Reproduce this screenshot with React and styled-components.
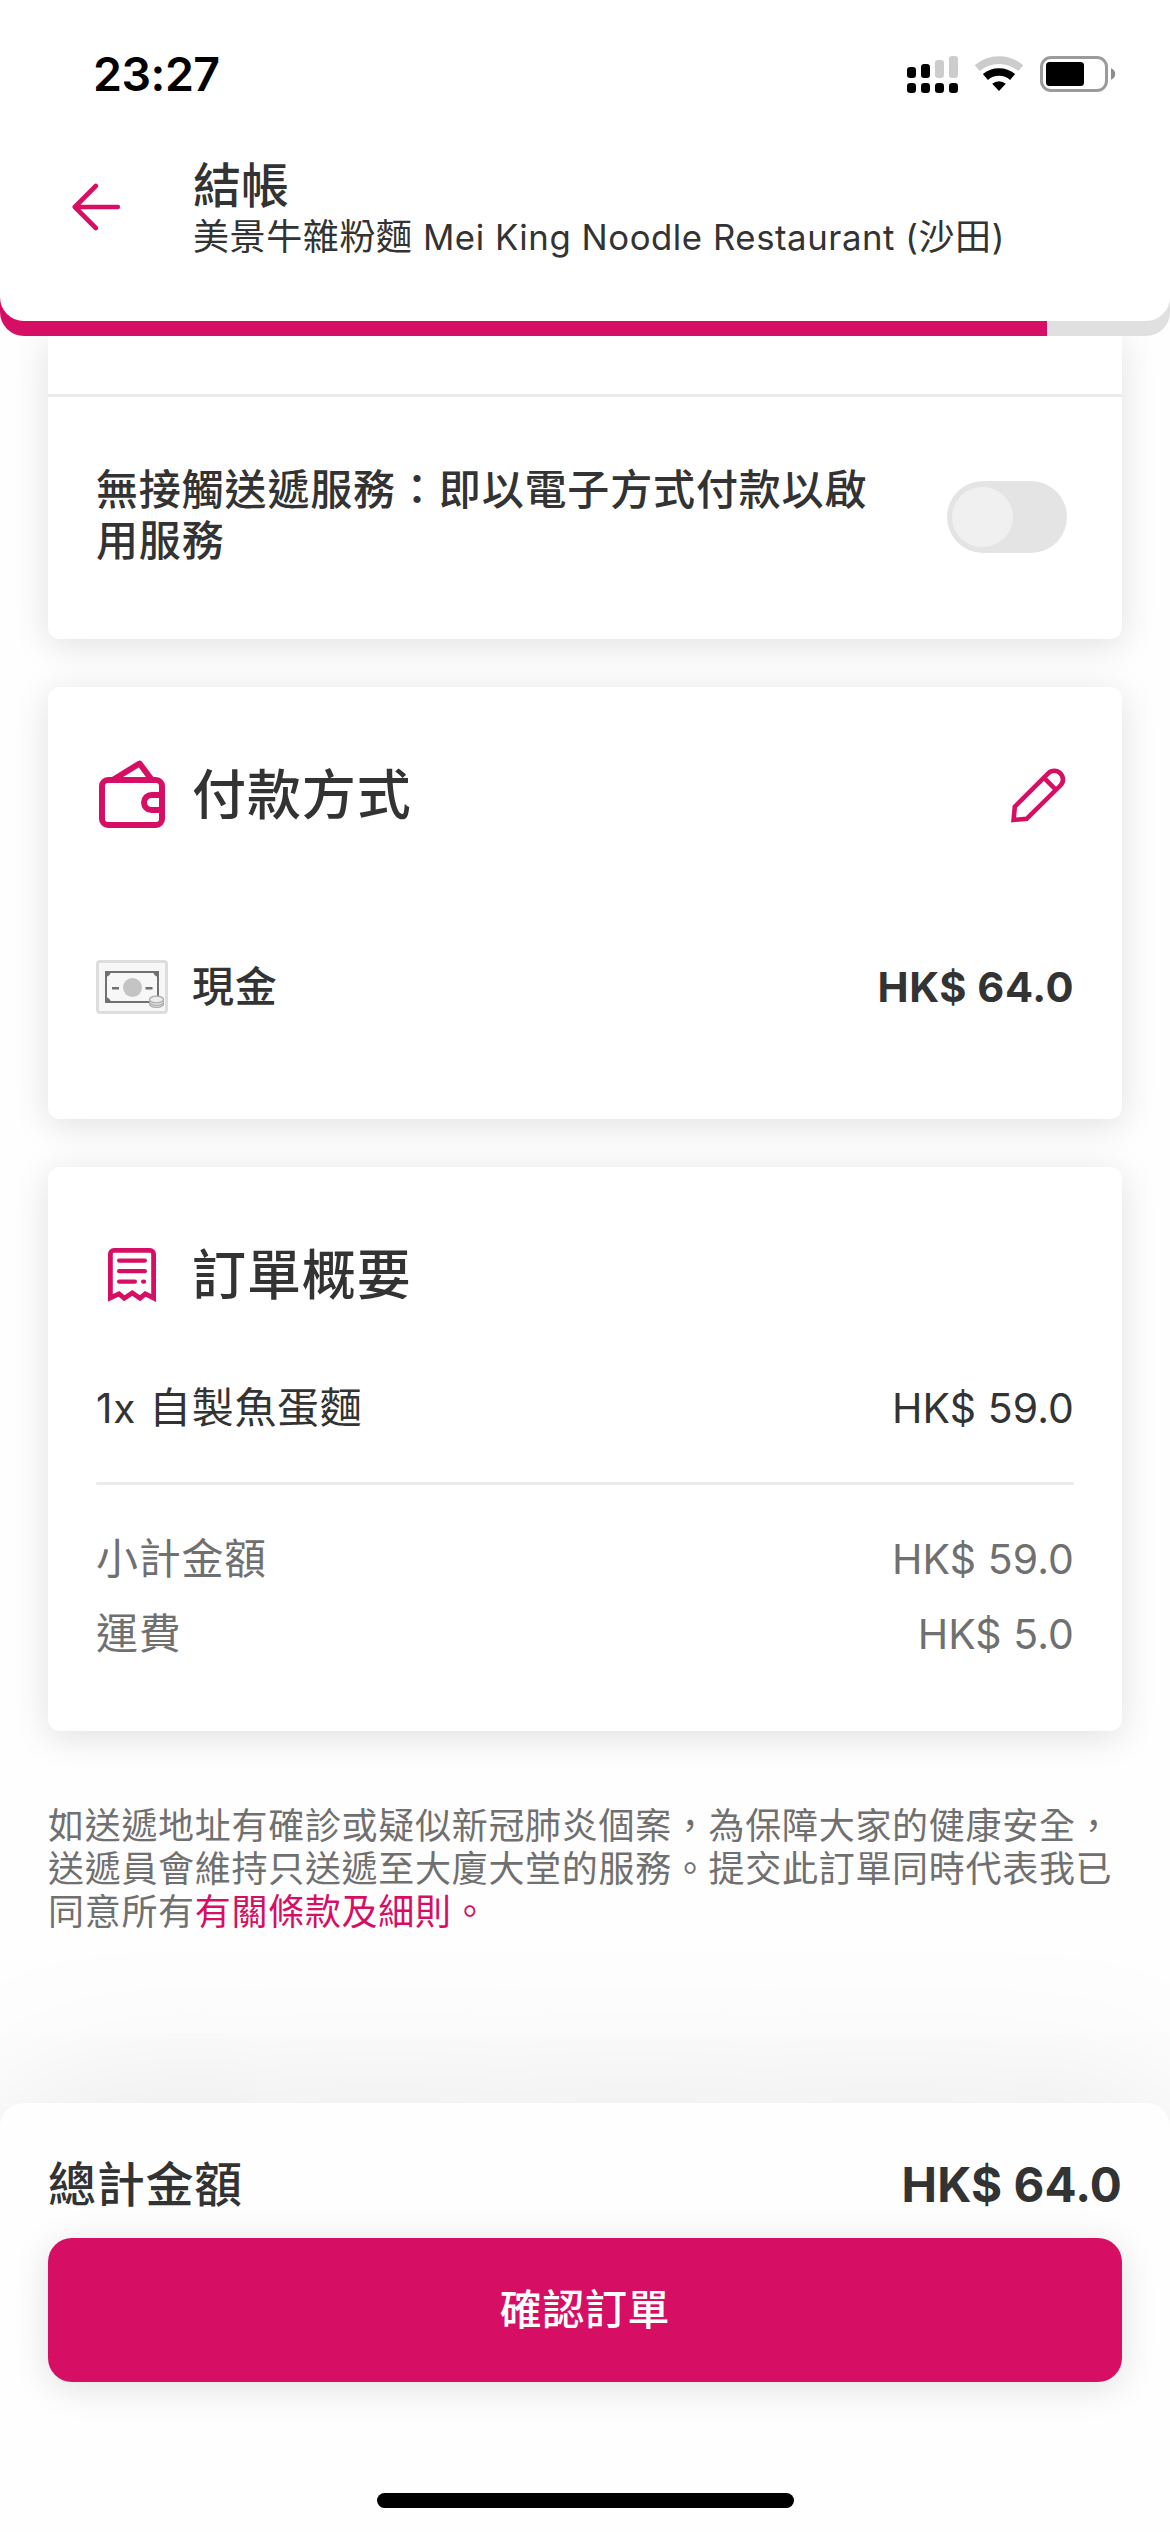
import React from "react";
import styled, { createGlobalStyle } from "styled-components";

const PINK = "#d70f64";
const INK = "#333333";
const MUTED = "#707070";

const GlobalStyle = createGlobalStyle`
  *, *::before, *::after { box-sizing: border-box; }
  body {
    margin: 0;
    background: #fff;
    color: ${INK};
    font-family: Inter, "Noto Sans CJK TC", sans-serif;
  }
`;

const Screen = styled.div`
  width: 1170px;
  height: 2532px;
  display: flex;
  flex-direction: column;
  overflow: hidden;
  background: #fefefe;
`;

const ProgressTrack = styled.header`
  flex: none;
  height: 336px;
  padding-bottom: 15px;
  border-radius: 0 0 24px 24px;
  background: linear-gradient(to right, ${PINK} 1047px, #e0e0e0 1047px);
  z-index: 2;
`;

const HeaderPanel = styled.div`
  height: 321px;
  border-radius: 0 0 24px 24px;
  background: #fff;
  display: flex;
  flex-direction: column;
`;

const StatusBar = styled.div`
  height: 141px;
  padding: 46px 54px 0 93px;
  display: flex;
  justify-content: space-between;
  align-items: flex-start;
`;

const Clock = styled.span`
  font-size: 46.5px;
  line-height: 57px;
  font-weight: 600;
  letter-spacing: -0.5px;
  color: #000;
`;

const StatusIcons = styled.svg`
  width: 210px;
  height: 40px;
  margin-top: 8px;
`;

const NavRow = styled.div`
  display: flex;
  padding: 13px 0 0 72px;
  gap: 72px;
`;

const BackIcon = styled.svg`
  width: 49px;
  height: 48px;
  margin-top: 29px;
`;

const Titles = styled.div`
  display: flex;
  flex-direction: column;
  padding-top: 2px;
`;

const Title = styled.h1`
  margin: 0;
  font-size: 48px;
  line-height: 60px;
  font-weight: 500;
`;

const Subtitle = styled.p`
  margin: 0;
  font-size: 36px;
  line-height: 42px;
  letter-spacing: 0.6px;
  white-space: nowrap;
`;

const Latin = styled.span`
  font-size: 0.965em;
  letter-spacing: 0.55px;
`;

const Content = styled.main`
  flex: none;
  height: 1767px;
  padding: 0 48px;
  display: flex;
  flex-direction: column;
`;

const Card = styled.section`
  flex: none;
  height: ${(p) => p.$height}px;
  margin-bottom: 48px;
  border-radius: ${(p) => (p.$cut ? "0 0 12px 12px" : "12px")};
  background: #fff;
  box-shadow: 0 6px 36px rgba(0, 0, 0, 0.12);
  display: flex;
  flex-direction: column;
`;

const CardTail = styled.div`
  height: 61px;
  border-bottom: 3px solid #ebebeb;
`;

const ToggleRow = styled.div`
  flex: 1;
  padding: 0 55px 2px 48px;
  display: flex;
  align-items: center;
  justify-content: space-between;
`;

const ToggleLabel = styled.p`
  margin: 0;
  padding-bottom: 3px;
  width: 790px;
  font-size: 42px;
  line-height: 50.5px;
  letter-spacing: 0.85px;
  font-weight: 500;
`;

const Switch = styled.div`
  width: 120px;
  height: 72px;
  padding: 6px 5px;
  border-radius: 36px;
  background: #e4e4e4;
`;

const Knob = styled.div`
  width: 61px;
  height: 60px;
  border-radius: 50%;
  background: #f0f0f0;
`;

const CardHeader = styled.div`
  height: 216px;
  padding: 0 48px;
  display: flex;
  align-items: center;
`;

const CardIcon = styled.svg`
  flex: none;
  width: 72px;
  height: 72px;
  margin-right: 24px;
`;

const CardTitle = styled.h2`
  flex: 1;
  margin: 0;
  padding-top: 1px;
  font-size: 54px;
  line-height: 64px;
  letter-spacing: 0.9px;
  font-weight: 500;
`;

const EditIcon = styled.svg`
  width: 60px;
  height: 60px;
  margin-right: 5px;
`;

const Line = styled.div`
  height: ${(p) => p.$height || 75}px;
  margin: 0 ${(p) => (p.$flush ? 0 : 48)}px;
  display: flex;
  align-items: center;
  font-size: ${(p) => p.$size || 42}px;
  font-weight: ${(p) => p.$weight || 400};
  letter-spacing: 0.7px;
  color: ${(p) => (p.$muted ? MUTED : INK)};
`;

const Label = styled.span`
  padding-bottom: 7px;
`;

const Quantity = styled.span`
  margin-right: 13px;
  font-size: 0.965em;
`;

const CashIcon = styled.svg`
  flex: none;
  width: 72px;
  height: 54px;
  margin-right: 24px;
`;

const Amount = styled.span`
  margin-left: auto;
  font-size: ${(p) => (p.$bold ? 0.99 : 0.975)}em;
  font-weight: ${(p) => (p.$bold ? 700 : 400)};
  letter-spacing: ${(p) => p.$tracking || 0.1}px;
`;

const Rule = styled.hr`
  flex: none;
  height: 3px;
  margin: 50px 48px 36px;
  border: 0;
  border-radius: 2px;
  background: #ebebeb;
`;

const Notice = styled.p`
  margin: 26px -10px 0 0;
  font-size: 36px;
  line-height: 43.2px;
  letter-spacing: 0.7px;
  color: ${MUTED};
`;

const Terms = styled.a`
  color: ${PINK};
`;

const Footer = styled.footer`
  flex: 1;
  padding: 36px 48px 24px;
  border-radius: 24px 24px 0 0;
  background: #fefefe;
  box-shadow: 0 0 180px rgba(0, 0, 0, 0.1);
  display: flex;
  flex-direction: column;
  z-index: 1;
`;

const Confirm = styled.button`
  flex: none;
  height: 144px;
  margin-top: 9px;
  padding: 0 0 7px;
  border: 0;
  border-radius: 24px;
  background: ${PINK};
  box-shadow: 0 6px 36px rgba(0, 0, 0, 0.12);
  color: #fff;
  font: 500 42px Inter, "Noto Sans CJK TC", sans-serif;
  letter-spacing: 0.6px;
`;

const HomeBar = styled.div`
  width: 417px;
  height: 15px;
  margin: auto auto 0;
  border-radius: 8px;
  background: #000;
`;

function StatusGlyphs() {
  return (
    <StatusIcons viewBox="906 54 210 40">
      {[907, 921, 935, 949].map((x, i) => {
        const top = [67, 64, 60, 56][i];
        return (
          <g key={x}>
            <rect x={x} y={top} width="9" height={78 - top} rx="3.2" fill={i < 2 ? "#000" : "#ccc"} />
            <rect x={x} y="83" width="9" height="10" rx="3.2" fill="#000" />
          </g>
        );
      })}
      <g fill="none">
        <path d="M977.2 68.2a33.5 33.5 0 0 1 43.6 0" stroke="#ccc" strokeWidth="7.6" />
        <path d="M985.4 77a20.8 20.8 0 0 1 27.2 0" stroke="#000" strokeWidth="7.6" />
      </g>
      <path d="M992.2 83.7a10.5 10.5 0 0 1 13.6 0l-6.8 7.3z" fill="#000" />
      <rect x="1041.5" y="57.5" width="65" height="33" rx="9.5" fill="none" stroke="#9b9b9b" strokeWidth="3" />
      <rect x="1046" y="62" width="38" height="24" rx="3.5" fill="#000" />
      <path d="M1111 68.2c2.6 1 4.2 3 4.2 5.8s-1.6 4.8-4.2 5.8z" fill="#8c8c8c" />
    </StatusIcons>
  );
}

export default function App() {
  return (
    <>
      <GlobalStyle />
      <Screen>
        <ProgressTrack>
          <HeaderPanel>
            <StatusBar>
              <Clock>23:27</Clock>
              <StatusGlyphs />
            </StatusBar>
            <NavRow>
              <BackIcon viewBox="72 183 49 48" fill="none" stroke={PINK} strokeWidth="4.6" strokeLinecap="round" strokeLinejoin="round">
                <path d="M117.8 207H74.8M95.8 186L74.8 207L95.8 228" />
              </BackIcon>
              <Titles>
                <Title>結帳</Title>
                <Subtitle>
                  美景牛雜粉麵<Latin> Mei King Noodle Restaurant (</Latin>沙田<Latin>)</Latin>
                </Subtitle>
              </Titles>
            </NavRow>
          </HeaderPanel>
        </ProgressTrack>

        <Content>
          <Card $height={303} $cut>
            <CardTail />
            <ToggleRow>
              <ToggleLabel>無接觸送遞服務：即以電子方式付款以啟用服務</ToggleLabel>
              <Switch role="switch" aria-checked="false">
                <Knob />
              </Switch>
            </ToggleRow>
          </Card>

          <Card $height={432}>
            <CardHeader>
              <CardIcon viewBox="96 759 72 72" fill="none" stroke={PINK} strokeWidth="6">
                <rect x="102" y="780" width="60" height="45" rx="6" />
                <path d="M162 795h-10.5a7.5 7.5 0 0 0 0 15H162" />
                <path d="M113.5 779.5L139.6 763.5L151.5 779.5" strokeLinejoin="round" />
              </CardIcon>
              <CardTitle>付款方式</CardTitle>
              <EditIcon viewBox="1009 765 60 60" fill="none" stroke={PINK} strokeWidth="4.6">
                <path d="M1013.6 819.9L1014.8 806.7L1048.2 773.3a8.4 8.4 0 0 1 12.2 12.2L1026.6 818.8z" />
                <path d="M1043.8 777.7L1056 789.9" />
              </EditIcon>
            </CardHeader>
            <Line $height={168} $weight={500}>
              <CashIcon viewBox="0 0 72 54">
                <rect x="1.5" y="1.5" width="69" height="51" rx="2.5" fill="#f7f7f7" stroke="#ddd" strokeWidth="3" />
                <rect x="10" y="12" width="52" height="30" fill="none" stroke="#707070" strokeWidth="2" />
                <path d="M9 11h6a6 6 0 0 1-6 6zM63 11h-6a6 6 0 0 0 6 6zM9 43h6a6 6 0 0 0-6-6z" fill="#707070" />
                <circle cx="36.5" cy="27.5" r="9.5" fill="#c4c4c4" />
                <path d="M16 28.2h7M49.5 28.2h7" stroke="#707070" strokeWidth="2.4" />
                <g fill="#ececec" stroke="#aaa" strokeWidth="1.2">
                  <ellipse cx="60.5" cy="44" rx="7" ry="3.4" />
                  <ellipse cx="60.5" cy="42" rx="7" ry="3.4" />
                  <ellipse cx="60.5" cy="39.5" rx="7" ry="3.4" />
                </g>
              </CashIcon>
              <Label>現金</Label>
              <Amount $bold $tracking={0.55}>HK$ 64.0</Amount>
            </Line>
          </Card>

          <Card $height={564}>
            <CardHeader>
              <CardIcon viewBox="96 1239 72 72" fill="none" stroke={PINK} strokeWidth="4.8">
                <path d="M110.4 1298V1254a3.6 3.6 0 0 1 3.6-3.6h36a3.6 3.6 0 0 1 3.6 3.6V1298L145.3 1293.8L140 1298.2L132.3 1293L124.3 1298.2L119 1293.8z" />
                <path d="M119.2 1260.6h25.6M119.2 1271.1h25.6M119.2 1281.6h15.6M143.2 1281.6h0.8" strokeLinecap="round" strokeWidth="4.4" />
              </CardIcon>
              <CardTitle>訂單概要</CardTitle>
            </CardHeader>
            <Line $height={49}>
              <Label>
                <Quantity>1x</Quantity>自製魚蛋麵
              </Label>
              <Amount>HK$ 59.0</Amount>
            </Line>
            <Rule />
            <Line $muted>
              <Label>小計金額</Label>
              <Amount>HK$ 59.0</Amount>
            </Line>
            <Line $muted>
              <Label>運費</Label>
              <Amount>HK$ 5.0</Amount>
            </Line>
          </Card>

          <Notice>
            如送遞地址有確診或疑似新冠肺炎個案，為保障大家的健康安全，
            <br />
            送遞員會維持只送遞至大廈大堂的服務。提交此訂單同時代表我已
            <br />
            同意所有<Terms>有關條款及細則。</Terms>
          </Notice>
        </Content>

        <Footer>
          <Line $flush $height={90} $size={48} $weight={500}>
            <Label>總計金額</Label>
            <Amount $bold $tracking={0.12}>HK$ 64.0</Amount>
          </Line>
          <Confirm>確認訂單</Confirm>
          <HomeBar />
        </Footer>
      </Screen>
    </>
  );
}
